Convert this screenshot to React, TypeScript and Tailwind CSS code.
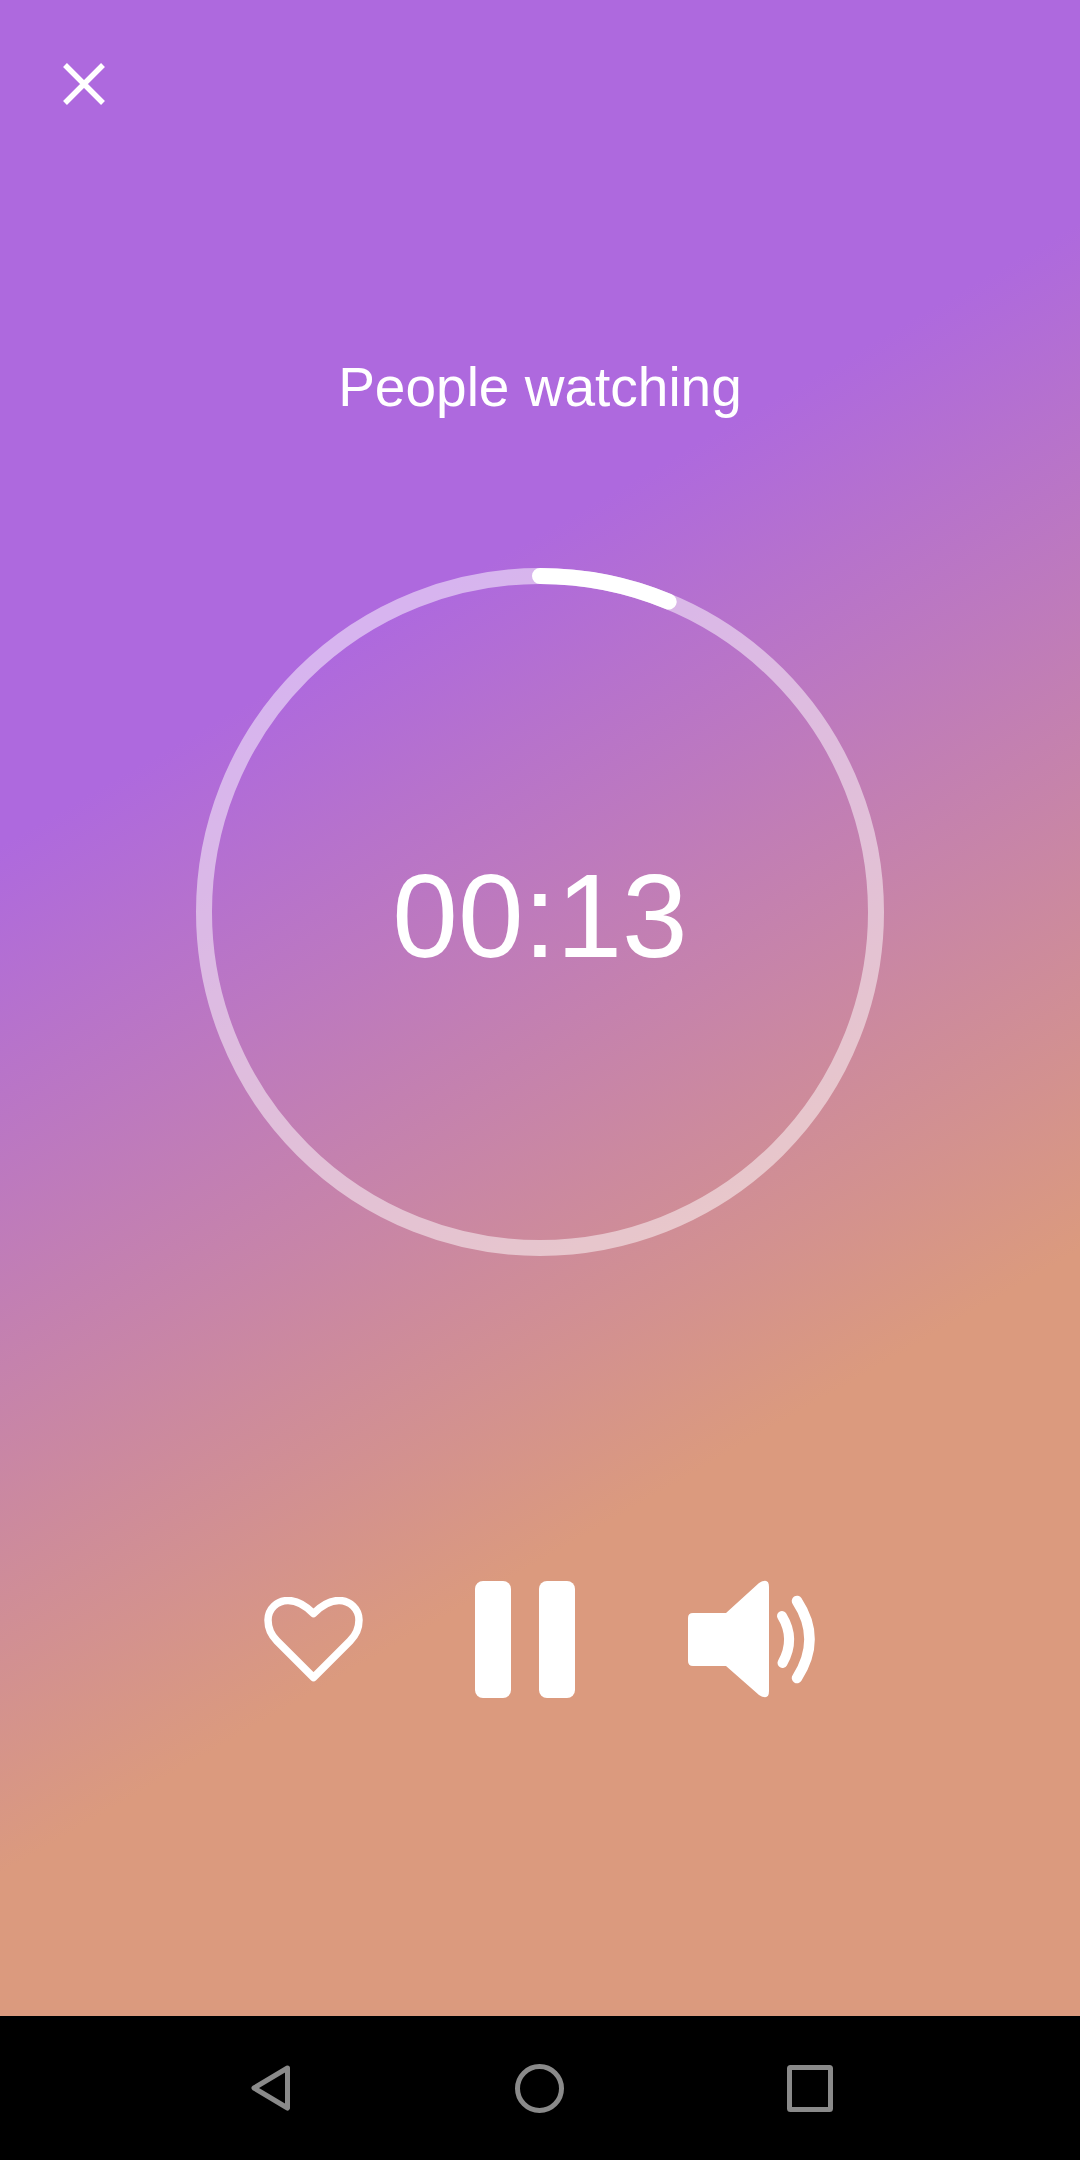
const font = { fontFamily: '"Liberation Sans", Arial, sans-serif' };

function CloseIcon() {
  return (
    <svg width="48" height="48" viewBox="0 0 48 48" fill="none" stroke="white" strokeWidth="5.5">
      <path d="M5 5 L43 43 M43 5 L5 43" />
    </svg>
  );
}

function Ring() {
  return (
    <div className="relative mx-auto mt-[149px] h-[688px] w-[688px]">
      <svg width="688" height="688" viewBox="0 0 688 688" fill="none" strokeWidth="16">
        <circle cx="344" cy="344" r="336" stroke="white" strokeOpacity="0.5" />
        <circle
          cx="344"
          cy="344"
          r="336"
          stroke="white"
          strokeLinecap="round"
          strokeDasharray="132 2111"
          transform="rotate(-90 344 344)"
        />
      </svg>
      <div className="absolute inset-0 flex items-center justify-center pt-2 text-[118px] leading-none text-white">
        00:13
      </div>
    </div>
  );
}

function HeartIcon() {
  return (
    <svg width="101" height="85" viewBox="0 0 101 85" fill="none" stroke="white" strokeWidth="7.5" strokeLinejoin="round">
      <path d="M50.5 80.5 L14 44 C8 38 5 31 5 23 C5 12 14 3.5 25 3.5 C35 3.5 43 9 50.5 16.5 C58 9 66 3.5 76 3.5 C87 3.5 96 12 96 23 C96 31 93 38 87 44 Z" />
    </svg>
  );
}

function SpeakerIcon() {
  return (
    <svg width="127" height="118" viewBox="0 0 127 118" fill="none">
      <path
        fill="white"
        d="M5 33 H38 L71 3 Q81 -3 81 7 V111 Q81 121 71 115 L38 86 H5 Q0 86 0 81 V38 Q0 33 5 33 Z"
      />
      <path d="M94 36 Q108 59 94.5 83" stroke="white" strokeWidth="10" strokeLinecap="round" />
      <path d="M109 21 Q134 59 109 98" stroke="white" strokeWidth="10.5" strokeLinecap="round" />
    </svg>
  );
}

export default function App() {
  return (
    <div className="flex h-[2160px] w-[1080px] flex-col" style={font}>
      <main className="h-[2016px] bg-[linear-gradient(150deg,#ae69de_32%,#db9a7e_71%)] pt-[60px]">
        <div className="pl-[60px]">
          <CloseIcon />
        </div>

        <h1 className="mt-[247px] text-center text-[55px] leading-[64px] font-normal text-white">People watching</h1>

        <Ring />

        <div className="mt-[324px] flex h-[118px] items-center pl-[263px]">
          <HeartIcon />
          <div className="ml-[111px] flex h-[117px] gap-[28px]">
            <div className="w-[36px] rounded-[8px] bg-white" />
            <div className="w-[36px] rounded-[8px] bg-white" />
          </div>
          <div className="ml-[113px]">
            <SpeakerIcon />
          </div>
        </div>
      </main>

      <nav className="flex h-[144px] items-center bg-black pl-[251px]">
        <svg width="39" height="46" viewBox="0 0 39 46" fill="none" stroke="#8a8a8a" strokeWidth="5" strokeLinejoin="round">
          <path d="M36.5 3 L3 23 L36.5 43 Z" />
        </svg>
        <svg className="ml-[225px]" width="49" height="49" viewBox="0 0 49 49" fill="none" stroke="#8a8a8a" strokeWidth="5">
          <circle cx="24.5" cy="24.5" r="22" />
        </svg>
        <svg className="ml-[223px]" width="46" height="47" viewBox="0 0 46 47" fill="none" stroke="#8a8a8a" strokeWidth="5" strokeLinejoin="round">
          <rect x="2.5" y="2.5" width="41" height="42" rx="1" />
        </svg>
      </nav>
    </div>
  );
}
